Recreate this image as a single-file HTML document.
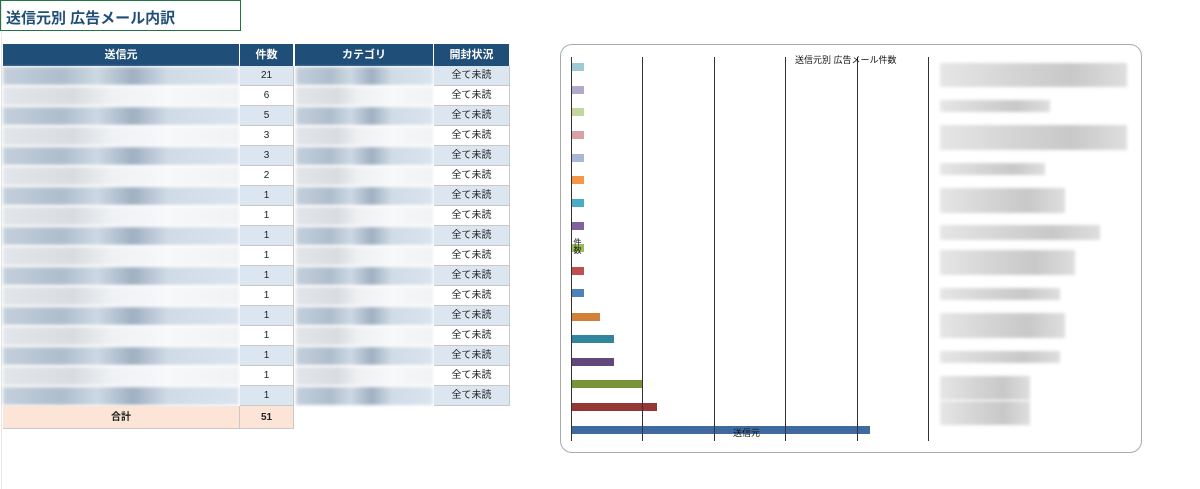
<!DOCTYPE html>
<html><head><meta charset="utf-8"><style>
*{margin:0;padding:0;box-sizing:border-box}
body{width:1200px;height:489px;background:#fff;position:relative;overflow:hidden;font-family:"Liberation Sans","Noto Sans CJK JP",sans-serif}
.a{position:absolute}
.title{left:0;top:0;width:241px;height:31px;border:1.5px solid #217346;color:#1f4e79;font-size:15px;font-weight:bold;padding:6px 0 0 5px}
.vl{left:1px;top:0;width:1px;height:489px;background:#e6e6e6}
.h{top:44px;height:22px;background:#1f4e79;color:#fff;font-size:11px;font-weight:bold;text-align:center;line-height:22px;border-right:1px solid #fff}
.c{height:20px;font-size:10px;text-align:center;line-height:20px;color:#222;border-bottom:1px solid #c8c8c8;border-right:1px solid #c8c8c8}
.b{background:#dce6f1}.w{background:#fff}
.bb{background:linear-gradient(90deg,#c4d0dc,#aebdcc 25%,#cdd8e3 40%,#9fb0c2 55%,#d0dbe6 70%,#dae4ee);filter:blur(1.5px)}
.ww{background:linear-gradient(90deg,#e2e5e9,#d8dce0 30%,#eef0f2 45%,#f7f8f9 70%,#f0f2f4);filter:blur(1.5px)}
.chart{left:560px;top:44px;width:582px;height:409px;border:1.5px solid #aaa;border-radius:12px}
.gl{top:57px;width:1px;height:384px;background:#333}
.bar{left:572px;height:8px}
.lg{left:940px;background:linear-gradient(90deg,#e6e6e6,#d4d4d4 40%,#c8c8c8 70%,#dedede);filter:blur(1.5px)}
</style></head><body>
<div class="a vl"></div>
<div class="a title">送信元別 広告メール内訳</div>
<div class="a h" style="left:3px;width:237px">送信元</div>
<div class="a h" style="left:240px;width:54px">件数</div>
<div class="a h" style="left:295px;width:139px">カテゴリ</div>
<div class="a h" style="left:434px;width:76px">開封状況</div>

<div id="rows"></div>
<script>
var n=[21,6,5,3,3,2,1,1,1,1,1,1,1,1,1,1,1],h='';
for(var i=0;i<17;i++){var y=66+i*20,bl=i%2==0,c=bl?'b':'w',f=bl?'bb':'ww';
h+='<div class="a '+f+'" style="left:3px;top:'+(y+1)+'px;width:236px;height:18px"></div>';
h+='<div class="a c '+c+'" style="left:240px;top:'+y+'px;width:54px">'+n[i]+'</div>';
h+='<div class="a '+f+'" style="left:296px;top:'+(y+1)+'px;width:137px;height:18px"></div>';
h+='<div class="a c '+c+'" style="left:434px;top:'+y+'px;width:76px">全て未読</div>';}
h+='<div class="a c" style="left:3px;top:406px;width:237px;height:23px;line-height:23px;background:#fce4d6;font-weight:bold">合計</div>';
h+='<div class="a c" style="left:240px;top:406px;width:54px;height:23px;line-height:23px;background:#fce4d6;font-weight:bold">51</div>';
var col=['#9fc9d4','#b3a9c9','#c3d69b','#d9a0a6','#a7b8d9','#f79646','#4bacc6','#8064a2','#9bbb59','#c0504d','#4f81bd','#d2813a','#31859c','#60497a','#77933c','#953735','#3f6aa0'];
var wd=[12,12,12,12,12,12,12,12,12,12,12,28,42,42,70,85,298];
var ys=[63,86,108,131,154,176,199,222,244,267,289,313,335,358,380,403,426];
for(var i=0;i<17;i++)h+='<div class="a bar" style="top:'+ys[i]+'px;width:'+wd[i]+'px;background:'+col[i]+'"></div>';
var L=[[63,24,187],[100,12,110],[125,25,187],[163,12,105],[188,25,125],[225,15,160],[250,25,135],[288,12,120],[313,25,125],[351,12,120],[376,24,90],[401,24,90]];
for(var i=0;i<L.length;i++)h+='<div class="a lg" style="top:'+L[i][0]+'px;height:'+L[i][1]+'px;width:'+L[i][2]+'px"></div>';
document.getElementById('rows').innerHTML=h;
</script>
<div class="a chart"></div>
<div class="a gl" style="left:571px"></div>
<div class="a gl" style="left:642px"></div>
<div class="a gl" style="left:714px"></div>
<div class="a gl" style="left:785px"></div>
<div class="a gl" style="left:857px"></div>
<div class="a gl" style="left:928px"></div>
<div class="a" style="left:795px;top:53px;font-size:9px;color:#111">送信元別 広告メール件数</div>
<div class="a" style="left:733px;top:426px;font-size:9px;color:#111">送信元</div>
<div class="a" style="left:572px;top:238px;font-size:8px;color:#111;writing-mode:vertical-rl">件数</div>
</body></html>
